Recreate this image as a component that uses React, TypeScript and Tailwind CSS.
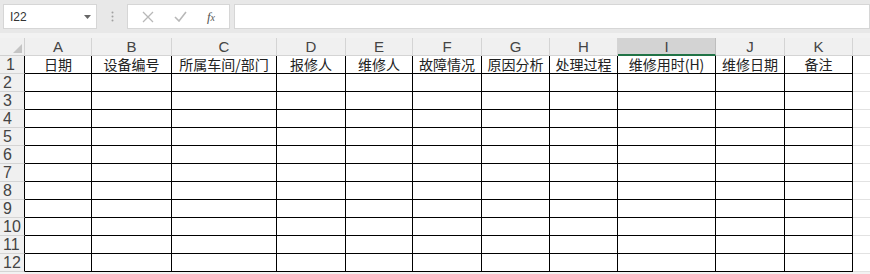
import React from "react"

const cols = [
  { letter: "A", title: "日期", w: "w-[67px]" },
  { letter: "B", title: "设备编号", w: "w-[80px]" },
  { letter: "C", title: "所属车间/部门", w: "w-[105px]" },
  { letter: "D", title: "报修人", w: "w-[69px]" },
  { letter: "E", title: "维修人", w: "w-[67px]" },
  { letter: "F", title: "故障情况", w: "w-[69px]" },
  { letter: "G", title: "原因分析", w: "w-[68px]" },
  { letter: "H", title: "处理过程", w: "w-[68px]" },
  { letter: "I", title: "维修用时(H)", w: "w-[98px]" },
  { letter: "J", title: "维修日期", w: "w-[69px]" },
  { letter: "K", title: "备注", w: "w-[68px]" },
]

const rows = [2, 3, 4, 5, 6, 7, 8, 9, 10, 11, 12]

export default function App() {
  return (
    <div className="h-[274px] w-[870px] overflow-hidden bg-[#f2f2f2] text-[#222] font-['Liberation_Sans','Noto_Sans_CJK_SC',sans-serif]">
      {/* formula bar */}
      <div className="flex h-[33px] items-center bg-[#e8e8e8] pl-[3px]">
        <div className="flex h-[25px] w-[94px] items-center justify-between border border-[#d6d6d6] bg-white pl-[6px] pr-[5px] text-[12px] text-[#333]">
          <span>I22</span>
          <svg width="7" height="4" viewBox="0 0 7 4"><path d="M0 0h7L3.5 4z" fill="#666" /></svg>
        </div>
        <div className="flex w-[30px] justify-center">
          <svg width="3" height="11" viewBox="0 0 3 11">
            <circle cx="1.5" cy="1.5" r="1" fill="#a0a0a0" />
            <circle cx="1.5" cy="5.5" r="1" fill="#a0a0a0" />
            <circle cx="1.5" cy="9.5" r="1" fill="#a0a0a0" />
          </svg>
        </div>
        <div className="flex h-[25px] w-[103px] items-center justify-around border border-[#d6d6d6] bg-white px-[4px]">
          <svg width="12" height="12" viewBox="0 0 12 12"><path d="M1 1l10 10M11 1L1 11" stroke="#b8b8b8" strokeWidth="1.3" /></svg>
          <svg width="13" height="11" viewBox="0 0 13 11"><path d="M1 6l4 4 7-9" stroke="#b8b8b8" strokeWidth="1.6" fill="none" /></svg>
          <span className="font-['Liberation_Serif',serif] text-[13px] italic text-[#555]">f<span className="text-[10px]">x</span></span>
        </div>
        <div className="ml-[4px] h-[25px] flex-1 border border-[#d6d6d6] bg-white" />
      </div>
      <div className="h-[5px]" />

      {/* column headers */}
      <div className="flex h-[18px] bg-[#f0f0f0] text-[15px] leading-[17px] text-[#444]">
        <div className="flex w-[25px] items-end justify-end border-r border-b border-[#d0d0d0] pb-[2px] pr-[2px]">
          <svg width="9" height="9" viewBox="0 0 9 9"><path d="M9 0v9H0z" fill="#c4c4c4" /></svg>
        </div>
        {cols.map((c) =>
          c.letter === "I" ? (
            <div key={c.letter} className={`${c.w} border-r border-b-2 border-r-[#bdbdbd] border-b-[#217346] bg-[#d3d3d3] text-center`}>
              {c.letter}
            </div>
          ) : (
            <div key={c.letter} className={`${c.w} border-r border-b border-[#d4d4d4] text-center`}>
              {c.letter}
            </div>
          )
        )}
        <div className="flex-1 border-b border-[#d4d4d4]" />
      </div>

      {/* row 1 */}
      <div className="flex h-[18px] text-[16px] leading-[17px]">
        <div className="w-[25px] border-r border-r-black border-b border-b-[#d4d4d4] bg-[#f0f0f0] pl-[6px] text-[#444]">1</div>
        {cols.map((c) => (
          <div key={c.letter} className={`${c.w} border-r border-b border-black bg-white text-center font-['Noto_Sans_CJK_SC',sans-serif] text-[14px] leading-[16px] text-[#222]`}>
            {c.title}
          </div>
        ))}
        <div className="flex-1 border-b border-[#e2e2e2] bg-white" />
      </div>

      {rows.map((r) => (
        <div key={r} className="flex h-[18px] text-[16px] leading-[17px]">
          <div className="w-[25px] border-r border-r-black border-b border-b-[#d4d4d4] bg-[#f0f0f0] pl-[3px] text-[#444]">{r}</div>
          {cols.map((c) => (
            <div key={c.letter} className={`${c.w} border-r border-b border-black bg-white`} />
          ))}
          <div className="flex-1 border-b border-[#e2e2e2] bg-white" />
        </div>
      ))}
    </div>
  )
}
